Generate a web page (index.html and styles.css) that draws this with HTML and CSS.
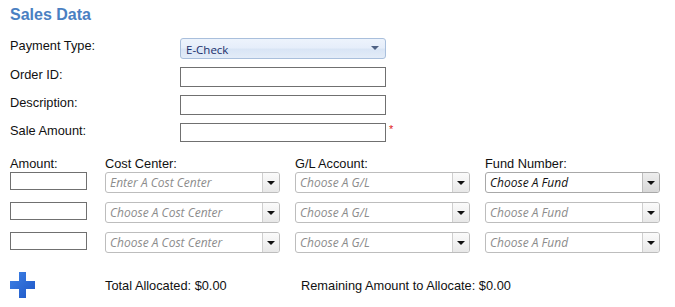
FILE: index.html
```html
<!DOCTYPE html>
<html>
<head>
<meta charset="utf-8">
<link rel="stylesheet" href="styles.css">
</head>
<body>
<div class="page">
  <h1 class="title">Sales Data</h1>
  <div class="form">
    <div class="label lbl-pay">Payment Type:</div>
    <div class="ddl"><span>E-Check</span><i class="ddl-arrow"></i></div>
    <div class="label">Order ID:</div>
    <div class="field"><div class="input wide"></div></div>
    <div class="label">Description:</div>
    <div class="field"><div class="input wide"></div></div>
    <div class="label">Sale Amount:</div>
    <div class="field"><div class="input wide"></div><span class="req">*</span></div>
  </div>

  <div class="alloc">
    <div class="head">Amount:</div>
    <div class="head">Cost Center:</div>
    <div class="head">G/L Account:</div>
    <div class="head">Fund Number:</div>

    <div class="cell"><div class="input amt"></div></div>
    <div class="cell"><div class="combo"><span class="ph">Enter A Cost Center</span><b class="btn"><i></i></b></div></div>
    <div class="cell"><div class="combo"><span class="ph">Choose A G/L</span><b class="btn"><i></i></b></div></div>
    <div class="cell"><div class="combo active"><span class="val">Choose A Fund</span><b class="btn"><i></i></b></div></div>

    <div class="cell"><div class="input amt"></div></div>
    <div class="cell"><div class="combo"><span class="ph">Choose A Cost Center</span><b class="btn"><i></i></b></div></div>
    <div class="cell"><div class="combo"><span class="ph">Choose A G/L</span><b class="btn"><i></i></b></div></div>
    <div class="cell"><div class="combo"><span class="ph">Choose A Fund</span><b class="btn"><i></i></b></div></div>

    <div class="cell"><div class="input amt"></div></div>
    <div class="cell"><div class="combo"><span class="ph">Choose A Cost Center</span><b class="btn"><i></i></b></div></div>
    <div class="cell"><div class="combo"><span class="ph">Choose A G/L</span><b class="btn"><i></i></b></div></div>
    <div class="cell"><div class="combo"><span class="ph">Choose A Fund</span><b class="btn"><i></i></b></div></div>
  </div>

  <div class="totals">
    <svg class="plus" width="25" height="26" viewBox="0 0 25 26">
      <defs>
        <linearGradient id="pg" x1="0" y1="0" x2="1" y2="1">
          <stop offset="0" stop-color="#3f82e6"/>
          <stop offset="1" stop-color="#1d56c6"/>
        </linearGradient>
      </defs>
      <path d="M9 0h7v9h9v8h-9v9h-7v-9h-9v-8h9z" fill="url(#pg)"/>
    </svg>
    <div class="tot">Total Allocated: $0.00</div>
    <div class="rem">Remaining Amount to Allocate: $0.00</div>
  </div>
</div>
</body>
</html>
```
FILE: styles.css
```css
* { box-sizing: border-box; }
html, body { margin: 0; padding: 0; background: #fff; }
body { font-family: "Liberation Sans", Arial, sans-serif; font-size: 12.8px; color: #111; }
.page { width: 675px; height: 307px; padding: 5px 10px 0 10px; overflow: hidden; }
.title {
  margin: 0;
  font-size: 16px; font-weight: bold; line-height: 20px;
  color: #4a80c2;
}
.form {
  display: grid;
  grid-template-columns: 170px 220px;
  grid-template-rows: 21px 20px 20px 19px;
  row-gap: 8px;
  margin-top: 13px;
}
.label { line-height: 15px; }
.field { display: flex; align-items: flex-start; }
.input { border: 1px solid #707070; background: #fff; }
.input.wide { width: 206px; height: 20px; }
.form .field:nth-of-type(3) .input, .form .field:last-child .input { height: 19px; }
.req { color: #e02020; font-size: 11px; margin-left: 3px; line-height: 10px; margin-top: 1px; }

.ddl {
  width: 206px; height: 21px;
  border: 1px solid #a9bfdc; border-radius: 3px;
  background: linear-gradient(#edf3fc 0%, #e6eefa 45%, #d9e5f5 55%, #e3ecf8 100%);
  display: flex; align-items: center; justify-content: space-between;
  padding: 0 6px 0 5px;
  font-family: "Open Sans", "Noto Sans", sans-serif; font-size: 11.5px; color: #1a2f6b;
}
.ddl span { padding-top: 2px; }
.ddl-arrow {
  width: 0; height: 0;
  border-left: 4px solid transparent; border-right: 4px solid transparent;
  border-top: 4px solid #4f6284;
  margin-top: -1px;
}

.alloc {
  display: grid;
  grid-template-columns: 95px 190px 190px 175px;
  grid-template-rows: 16px;
  grid-auto-rows: 30px;
  margin-top: 14px;
}
.head { line-height: 15px; }
.input.amt { width: 77px; height: 18px; }
.combo {
  width: 175px; height: 21px;
  border: 1px solid #bdbdbd; border-radius: 3px;
  background: #fff;
  display: flex; align-items: stretch; justify-content: space-between;
  overflow: hidden;
  font-family: "Open Sans", "Noto Sans", sans-serif; font-size: 12px; font-style: italic;
}
.combo span { padding: 1px 0 0 4px; line-height: 18px; white-space: nowrap; }
.combo .ph { color: #8c8c8c; }
.combo .val { color: #111; }
.combo .btn {
  width: 17px; flex: none;
  border-left: 1px solid #cfcfcf;
  background: linear-gradient(#fbfbfb, #e8e8e8);
  display: flex; align-items: center; justify-content: center;
}
.combo .btn i {
  width: 0; height: 0;
  border-left: 4px solid transparent; border-right: 4px solid transparent;
  border-top: 4px solid #111;
}
.combo.active { border-color: #a8a8a8; }
.combo.active .btn { background: linear-gradient(#eeeeee, #d8d8d8); border-left-color: #bdbdbd; }

.totals {
  display: grid;
  grid-template-columns: 95px 196px auto;
  align-items: center;
  margin-top: 10px;
}
.plus { display: block; }
.tot, .rem { line-height: 15px; padding-top: 1px; }
```
